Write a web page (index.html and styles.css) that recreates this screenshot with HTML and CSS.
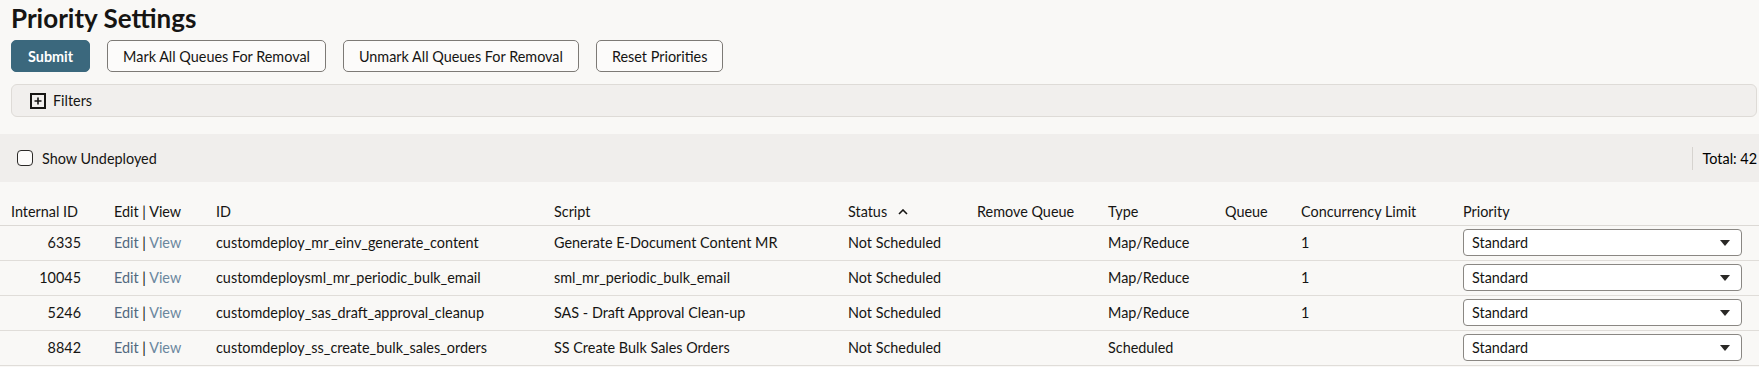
FILE: index.html
```html
<!DOCTYPE html>
<html>
<head>
<meta charset="utf-8">
<link rel="stylesheet" href="styles.css">
</head>
<body>
<div class="page-head">
  <h1 class="title">Priority Settings</h1>
  <div class="actions">
    <button class="btn btn-primary">Submit</button>
    <button class="btn">Mark All Queues For Removal</button>
    <button class="btn">Unmark All Queues For Removal</button>
    <button class="btn">Reset Priorities</button>
  </div>
  <div class="filters">
    <svg class="plus" width="16" height="16" viewBox="0 0 16 16"><rect x="1" y="1" width="14" height="14" fill="none" stroke="#161513" stroke-width="2"/><path d="M8 4.5v7M4.5 8h7" stroke="#161513" stroke-width="1.6"/></svg>
    <span>Filters</span>
  </div>
</div>
<div class="band">
  <span class="checkbox"></span>
  <span class="cb-label">Show Undeployed</span>
  <span class="spacer"></span>
  <span class="sep"></span>
  <span class="total">Total: 42</span>
</div>
<table class="grid">
  <colgroup>
    <col class="c1"><col class="c2"><col class="c3"><col class="c4"><col class="c5"><col class="c6"><col class="c7"><col class="c8"><col class="c9"><col>
  </colgroup>
  <thead>
    <tr>
      <th>Internal ID</th>
      <th>Edit | View</th>
      <th>ID</th>
      <th>Script</th>
      <th>Status <svg class="sort" width="10" height="6" viewBox="0 0 10 6"><path d="M1 5l4-4 4 4" fill="none" stroke="#161513" stroke-width="1.6"/></svg></th>
      <th>Remove Queue</th>
      <th>Type</th>
      <th>Queue</th>
      <th>Concurrency Limit</th>
      <th>Priority</th>
    </tr>
  </thead>
  <tbody>
    <tr>
      <td class="num">6335</td>
      <td><span class="edit">Edit</span> | <span class="view">View</span></td>
      <td>customdeploy_mr_einv_generate_content</td>
      <td>Generate E-Document Content MR</td>
      <td>Not Scheduled</td>
      <td></td>
      <td>Map/Reduce</td>
      <td></td>
      <td>1</td>
      <td><div class="select"><span>Standard</span><svg width="10" height="6" viewBox="0 0 10 6"><path d="M0 0h10L5 6z" fill="#2a2826"/></svg></div></td>
    </tr>
    <tr>
      <td class="num">10045</td>
      <td><span class="edit">Edit</span> | <span class="view">View</span></td>
      <td>customdeploysml_mr_periodic_bulk_email</td>
      <td>sml_mr_periodic_bulk_email</td>
      <td>Not Scheduled</td>
      <td></td>
      <td>Map/Reduce</td>
      <td></td>
      <td>1</td>
      <td><div class="select"><span>Standard</span><svg width="10" height="6" viewBox="0 0 10 6"><path d="M0 0h10L5 6z" fill="#2a2826"/></svg></div></td>
    </tr>
    <tr>
      <td class="num">5246</td>
      <td><span class="edit">Edit</span> | <span class="view">View</span></td>
      <td>customdeploy_sas_draft_approval_cleanup</td>
      <td>SAS - Draft Approval Clean-up</td>
      <td>Not Scheduled</td>
      <td></td>
      <td>Map/Reduce</td>
      <td></td>
      <td>1</td>
      <td><div class="select"><span>Standard</span><svg width="10" height="6" viewBox="0 0 10 6"><path d="M0 0h10L5 6z" fill="#2a2826"/></svg></div></td>
    </tr>
    <tr>
      <td class="num">8842</td>
      <td><span class="edit">Edit</span> | <span class="view">View</span></td>
      <td>customdeploy_ss_create_bulk_sales_orders</td>
      <td>SS Create Bulk Sales Orders</td>
      <td>Not Scheduled</td>
      <td></td>
      <td>Scheduled</td>
      <td></td>
      <td></td>
      <td><div class="select"><span>Standard</span><svg width="10" height="6" viewBox="0 0 10 6"><path d="M0 0h10L5 6z" fill="#2a2826"/></svg></div></td>
    </tr>
  </tbody>
</table>
</body>
</html>
```
FILE: styles.css
```css
html, body {
  margin: 0;
  background: #f9f8f6;
  color: #161513;
  font-family: Lato, "Open Sans", sans-serif;
  font-size: 14.4px;
}
.page-head {
  padding: 0 2px 0 11px;
}
.title {
  margin: 3px 0 0;
  font-size: 26px;
  line-height: 30px;
  font-weight: 700;
}
.actions {
  display: flex;
  gap: 17px;
  margin-top: 7px;
}
.btn {
  height: 32px;
  box-sizing: border-box;
  padding: 0 15px;
  border: 1px solid #7d7a76;
  border-radius: 5px;
  background: #fcfbfa;
  color: #161513;
  font-family: Lato, "Open Sans", sans-serif;
  font-size: 14.4px;
}
.btn-primary {
  background: #3b687d;
  border-color: #3b687d;
  color: #ffffff;
  font-weight: 700;
  padding: 0 16px;
}
.filters {
  margin-top: 12px;
  height: 33px;
  box-sizing: border-box;
  border: 1px solid #dedbd7;
  border-radius: 6px;
  background: #f1efed;
  display: flex;
  align-items: center;
  gap: 7px;
  padding-left: 18px;
}
.plus { display: block; }
.band {
  margin-top: 17px;
  height: 48px;
  background: #f0eeec;
  display: flex;
  align-items: center;
  padding: 0 2px 0 17px;
}
.checkbox {
  width: 16px;
  height: 16px;
  box-sizing: border-box;
  border: 1.5px solid #2b2927;
  border-radius: 4px;
  background: #fcfbfa;
}
.cb-label { margin-left: 9px; }
.spacer { flex: 1; }
.sep {
  width: 1px;
  height: 23px;
  background: #d6d3cf;
  margin-right: 10px;
}
.total { color: #000000; }
.grid {
  width: 100%;
  border-collapse: collapse;
  table-layout: fixed;
}
.c1 { width: 103px; }
.c2 { width: 102px; }
.c3 { width: 338px; }
.c4 { width: 294px; }
.c5 { width: 129px; }
.c6 { width: 131px; }
.c7 { width: 117px; }
.c8 { width: 76px; }
.c9 { width: 162px; }
.grid th {
  height: 43px;
  box-sizing: border-box;
  padding: 0 0 4px 11px;
  vertical-align: bottom;
  text-align: left;
  font-weight: 400;
  line-height: 18px;
  white-space: nowrap;
  border-bottom: 1px solid #dcd9d5;
}
.sort { margin-left: 7px; vertical-align: 2px; }
.grid td {
  height: 35px;
  box-sizing: border-box;
  padding: 0 0 0 11px;
  vertical-align: middle;
  white-space: nowrap;
  border-bottom: 1px solid #e0ddd9;
  line-height: 18px;
}
.grid td.num {
  text-align: right;
  padding-right: 22px;
}
.edit { color: #52697e; }
.view { color: #6b879e; }
.select {
  width: 279px;
  height: 27px;
  box-sizing: border-box;
  border: 1px solid #8a8783;
  border-radius: 4px;
  background: #ffffff;
  display: flex;
  align-items: center;
  justify-content: space-between;
  padding: 0 11px 0 8px;
}
.select svg { display: block; }
```
